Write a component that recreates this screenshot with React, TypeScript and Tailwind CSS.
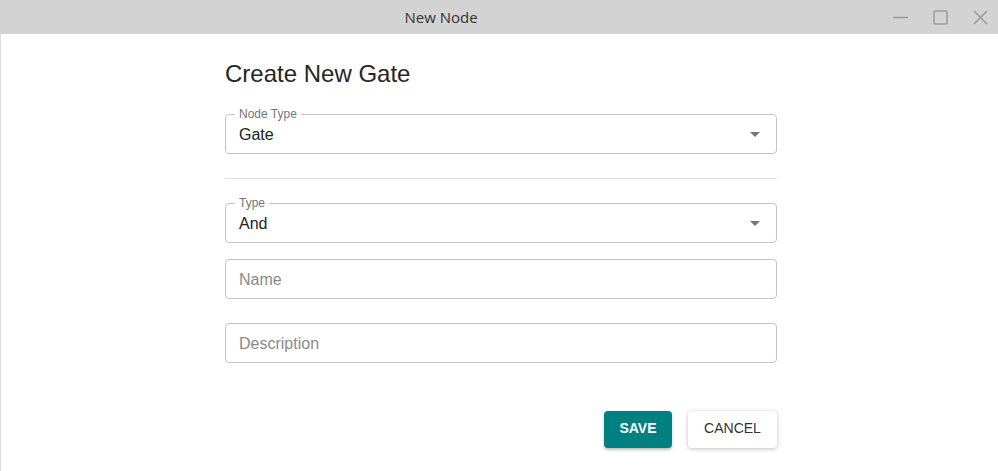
const Arrow = () => (
  <svg width="10" height="5" viewBox="0 0 10 5" className="shrink-0">
    <path d="M0 0 L10 0 L5 5 Z" fill="#757575" />
  </svg>
);

const SelectField = ({ label, value }: { label: string; value: string }) => (
  <div className="relative h-10 rounded border border-[#c4c4c4] flex items-center pl-[13px] pr-4">
    <span className="absolute -top-[8px] left-[9px] bg-white px-[4px] text-[12px] leading-[14px] text-[#757575]">
      {label}
    </span>
    <span className="flex-1 text-base text-[#212121] pt-[2px]">{value}</span>
    <Arrow />
  </div>
);

const TextField = ({ placeholder }: { placeholder: string }) => (
  <div className="h-10 rounded border border-[#c4c4c4] flex items-center pl-[13px] pt-px">
    <span className="text-base text-[#8a8a8a]">{placeholder}</span>
  </div>
);

export default function App() {
  return (
    <div className="w-[998px] h-[471px] bg-white flex flex-col font-['Liberation_Sans',Arial,sans-serif]">
      {/* Title bar */}
      <div className="h-[34px] bg-[#d3d3d3] flex items-center shrink-0">
        <div className="flex-1 text-center pl-[8px] text-[15px] text-[#333] font-['Open_Sans','Noto_Sans',sans-serif]">
          New Node
        </div>
        <div className="flex items-center gap-[25px] pr-[10px] w-[124px] justify-end">
          <svg width="15" height="15" viewBox="0 0 15 15">
            <line x1="0" y1="7.5" x2="15" y2="7.5" stroke="#9a9a9a" strokeWidth="1.5" />
          </svg>
          <svg width="15" height="15" viewBox="0 0 15 15">
            <rect x="1" y="1" width="13" height="13" fill="none" stroke="#9a9a9a" strokeWidth="1.5" rx="1" />
          </svg>
          <svg width="15" height="15" viewBox="0 0 15 15">
            <path d="M1 1 L14 14 M14 1 L1 14" stroke="#9a9a9a" strokeWidth="1.5" />
          </svg>
        </div>
      </div>

      {/* Body */}
      <div className="flex-1 border-l border-[#dcdcdc] flex justify-center">
        <div className="w-[552px] pt-[26px] ml-[3px]">
          <h1 className="text-[24px] leading-7 text-[#262626] mb-[26px]">Create New Gate</h1>

          <SelectField label="Node Type" value="Gate" />

          <div className="h-px bg-[#e0e0e0] my-6" />

          <SelectField label="Type" value="And" />

          <div className="mt-4">
            <TextField placeholder="Name" />
          </div>
          <div className="mt-6">
            <TextField placeholder="Description" />
          </div>

          <div className="flex justify-end gap-4 mt-12">
            <button className="h-[37px] w-[68px] rounded bg-[#008080] text-white text-sm leading-none pb-[3px] font-bold shadow-[0_2px_3px_rgba(0,0,0,0.25)]">
              SAVE
            </button>
            <button className="h-[37px] w-[89px] rounded bg-white text-[#333] text-sm leading-none pb-[3px] shadow-[0_1px_4px_rgba(0,0,0,0.25)]">
              CANCEL
            </button>
          </div>
        </div>
      </div>
    </div>
  );
}
